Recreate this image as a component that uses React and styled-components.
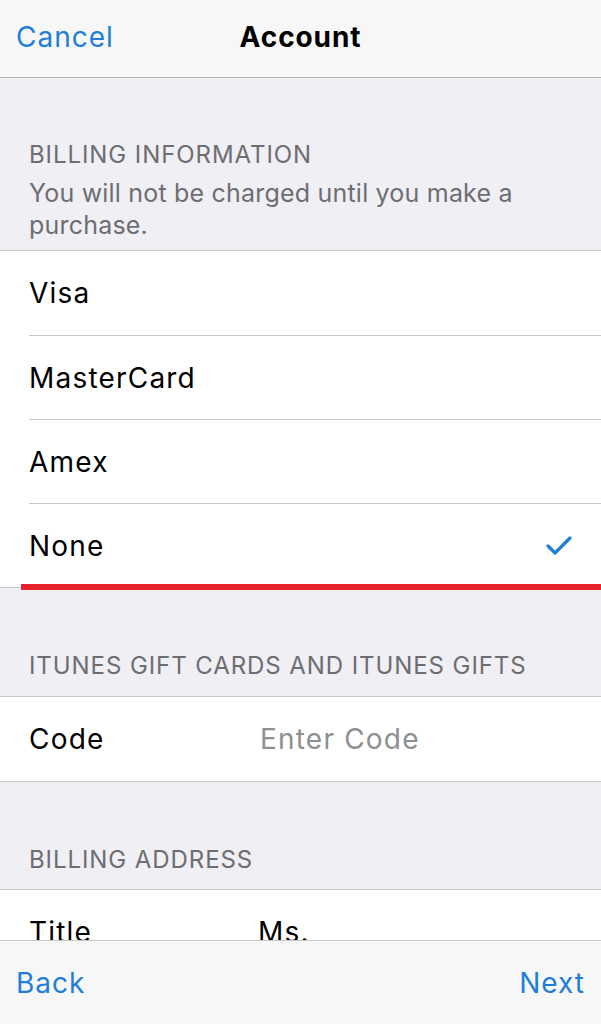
import React from 'react';
import styled, { createGlobalStyle } from 'styled-components';

const GlobalStyle = createGlobalStyle`
  html, body {
    margin: 0;
    padding: 0;
    background: #efeff4;
  }
  body {
    font-family: Inter, "Liberation Sans", sans-serif;
    -webkit-font-smoothing: antialiased;
  }
`;

const Screen = styled.div`
  width: 601px;
  height: 1024px;
  display: flex;
  flex-direction: column;
  overflow: hidden;
  background: #efeff4;
`;

const NavBar = styled.header`
  box-sizing: border-box;
  flex: 0 0 78px;
  display: grid;
  grid-template-columns: 1fr auto 1fr;
  align-items: center;
  padding: 0 16px 3px;
  background: #f7f7f8;
  border-bottom: 1px solid #b8b8bc;
`;

const BarButton = styled.span`
  font-size: 28px;
  letter-spacing: 1px;
  color: #1f7fd6;
  justify-self: ${(p) => (p.$right ? 'end' : 'start')};
`;

const Title = styled.h1`
  margin: 0;
  font-size: 28px;
  font-weight: 700;
  letter-spacing: 0.9px;
  color: #000;
`;

const Content = styled.main`
  flex: 1;
  overflow: hidden;
`;

const SectionHeader = styled.div`
  padding: ${(p) => p.$top}px 29px ${(p) => p.$bottom || 14}px;
  color: #6d6d72;
`;

const HeaderTitle = styled.div`
  font-size: 24px;
  line-height: 32px;
  letter-spacing: 0.92px;
  text-transform: uppercase;
`;

const HeaderNote = styled.div`
  margin-top: 6px;
  font-size: 25px;
  line-height: 32px;
  letter-spacing: 0.2px;
`;

const Group = styled.section`
  position: relative;
  background: #fff;
  border-top: 1px solid #c8c7cc;
  border-bottom: 1px solid #c8c7cc;
`;

const Row = styled.div`
  padding-left: 29px;
`;

const RowInner = styled.div`
  height: ${(p) => (p.$first ? 84 : 83)}px;
  display: flex;
  align-items: center;
  padding-right: 29px;
  border-top: ${(p) => (p.$first ? 'none' : '1px solid #c8c7cc')};
  font-size: 28px;
  letter-spacing: 1.2px;
  color: #000;
`;

const Label = styled.span`
  flex: 0 0 ${(p) => p.$width || 'auto'};
`;

const Value = styled.span`
  flex: 1;
  color: ${(p) => (p.$placeholder ? '#8e8e93' : '#000')};
`;

const Check = styled.svg`
  margin-left: auto;
  width: 26px;
  height: 22px;
`;

const RedMark = styled.div`
  position: absolute;
  left: 21px;
  right: 0;
  bottom: -3px;
  height: 6px;
  background: #e5222b;
`;

const Toolbar = styled.footer`
  box-sizing: border-box;
  flex: 0 0 84px;
  display: flex;
  align-items: center;
  justify-content: space-between;
  padding: 0 16px;
  background: #f7f7f8;
  border-top: 1px solid #c8c7cc;
`;

const cards = ['Visa', 'MasterCard', 'Amex', 'None'];

export default function App() {
  return (
    <>
      <GlobalStyle />
      <Screen>
        <NavBar>
          <BarButton>Cancel</BarButton>
          <Title>Account</Title>
          <span />
        </NavBar>
        <Content>
          <SectionHeader $top={61} $bottom={9}>
            <HeaderTitle>Billing Information</HeaderTitle>
            <HeaderNote>
              You will not be charged until you make a purchase.
            </HeaderNote>
          </SectionHeader>
          <Group>
            {cards.map((c, i) => (
              <Row key={c}>
                <RowInner $first={i === 0}>
                  <Label>{c}</Label>
                  {c === 'None' && (
                    <Check viewBox="0 0 26 22">
                      <polyline
                        points="2,11 9,18 24,3"
                        fill="none"
                        stroke="#1f7fd6"
                        strokeWidth="3.2"
                        strokeLinecap="round"
                        strokeLinejoin="round"
                      />
                    </Check>
                  )}
                </RowInner>
              </Row>
            ))}
            <RedMark />
          </Group>
          <SectionHeader $top={62}>
            <HeaderTitle>iTunes Gift Cards and iTunes Gifts</HeaderTitle>
          </SectionHeader>
          <Group>
            <Row>
              <RowInner $first>
                <Label $width="231px">Code</Label>
                <Value $placeholder>Enter Code</Value>
              </RowInner>
            </Row>
          </Group>
          <SectionHeader $top={62} $bottom={13}>
            <HeaderTitle>Billing Address</HeaderTitle>
          </SectionHeader>
          <Group>
            <Row>
              <RowInner $first>
                <Label $width="229px">Title</Label>
                <Value>Ms.</Value>
              </RowInner>
            </Row>
          </Group>
        </Content>
        <Toolbar>
          <BarButton>Back</BarButton>
          <BarButton $right>Next</BarButton>
        </Toolbar>
      </Screen>
    </>
  );
}
